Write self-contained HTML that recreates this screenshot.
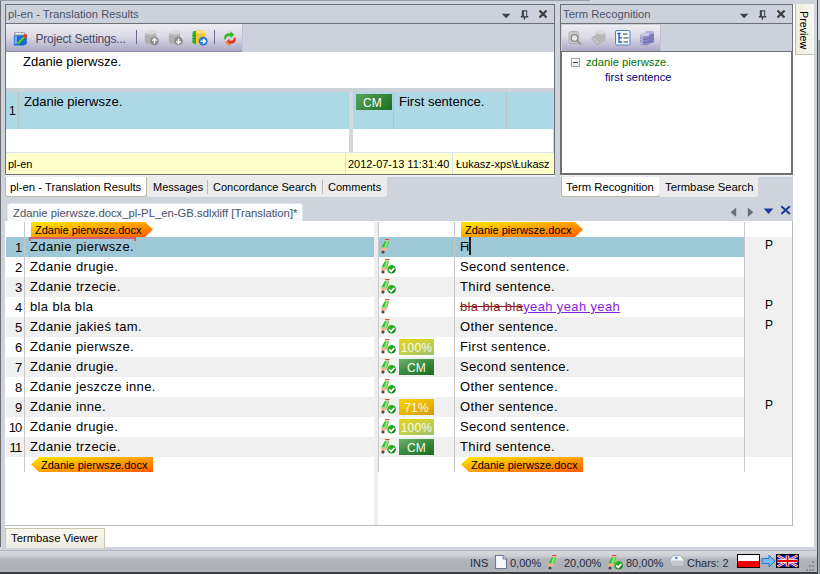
<!DOCTYPE html>
<html><head><meta charset="utf-8">
<style>
*{margin:0;padding:0;box-sizing:border-box}
html,body{width:820px;height:574px;overflow:hidden}
body{position:relative;background:#CFD3DC;font-family:"Liberation Sans",sans-serif;color:#000}
.a{position:absolute}
.t{position:absolute;white-space:nowrap;line-height:1}
svg.a{z-index:2}
.ui{font-size:11px}
.num{font-size:13px;letter-spacing:-0.8px}
.grid{font-size:13px;letter-spacing:0.36px}
.badge{width:35px;height:16px;color:#f4f8ee;font-size:12px;line-height:18px;text-align:center;letter-spacing:0.2px}
.b100{background:linear-gradient(160deg,#e8d21e,#c8d040 50%,#98c070)}
.bcm{background:linear-gradient(160deg,#6cb46c,#3a8a3e 50%,#1a6a20)}
.b71{background:linear-gradient(160deg,#fcd400,#eab800 50%,#d49a00)}
.tag{width:123px;height:15px}
.tag span{font-size:11px;color:#000;z-index:3}
</style></head><body>
<svg width="0" height="0" style="position:absolute">
<defs>
 <linearGradient id="tg" x1="0" y1="0" x2="1" y2="1">
  <stop offset="0" stop-color="#ffea00"/><stop offset="0.45" stop-color="#ffaa00"/><stop offset="1" stop-color="#ff5a00"/>
 </linearGradient>
 <linearGradient id="ckg" x1="0" y1="0" x2="1" y2="1"><stop offset="0" stop-color="#5ccc3c"/><stop offset="0.45" stop-color="#16a01a"/><stop offset="1" stop-color="#0a7010"/></linearGradient>
 <symbol id="penshape" viewBox="0 0 20 20">
  <polygon points="6.3,1.9 10.5,1.9 10.1,3.6 5.9,3.6" fill="#e4442a"/>
  <polygon points="5.9,3.6 10.1,3.6 10,4.2 5.7,4.2" fill="#f4f0ea"/>
  <polygon points="5.7,4.2 10,4.2 8.2,10.7 2.3,10.4" fill="#3cbc36"/>
  <polygon points="7.3,4.2 9.3,4.2 7.3,10.6 5.1,10.5" fill="#88ee70"/>
  <polygon points="2.2,10.4 8.2,10.7 7.5,12.6 5.1,14.6 2.5,14" fill="#f8b48a"/>
  <ellipse cx="4" cy="15" rx="1.6" ry="1.5" fill="#4a4a4e"/>
 </symbol>
 <symbol id="pen" viewBox="0 0 20 20"><use href="#penshape"/></symbol>
 <symbol id="pc" viewBox="0 0 20 20"><use href="#penshape"/>
  <circle cx="12.5" cy="12.3" r="4.3" fill="url(#ckg)"/>
  <path d="M10.2 12.5l2 1.9 3.1-3.5" stroke="#fff" stroke-width="1.8" fill="none"/>
 </symbol>
</defs></svg>

<!-- outer edges -->
<div class="a" style="left:0;top:0;width:1px;height:547px;background:#6b6d70"></div>
<div class="a" style="left:0;top:0;width:590px;height:1px;background:#9a9eaa"></div>
<div class="a" style="left:817px;top:0;width:1.2px;height:574px;background:#44484e"></div>
<div class="a" style="left:818.2px;top:40px;width:1.8px;height:534px;background:linear-gradient(90deg,#b4bcc0,#78868a)"></div>

<!-- ===== Top-left panel ===== -->
<div class="a" style="left:5px;top:4px;width:550px;height:171px;border:1px solid #6f7074;background:#CDD1DB"></div>
<div class="a" style="left:6px;top:23px;width:548px;height:1px;background:#6f7074"></div>
<div class="t ui" style="left:8px;top:8.5px;font-size:11.25px;color:#4a5468">pl-en - Translation Results</div>
<!-- title buttons -->
<svg class="a" style="left:500px;top:8px" width="50" height="14" viewBox="0 0 50 14">
 <path d="M1.8 5.8h8.6l-4.3 4.5z" fill="#3c3f48"/>
 <path d="M21.8 2.3h5.4v5.8h1v1.3h-3.1v2.4h-1.3v-2.4h-3v-1.3h1z" fill="#3c3f48"/>
 <rect x="23.9" y="3.4" width="2.3" height="4.7" fill="#CDD1DB"/>
 <path d="M39.5 2.5l7 7M46.5 2.5l-7 7" stroke="#3c3c3c" stroke-width="2.2"/>
</svg>
<!-- toolbar -->
<div class="a" style="left:6px;top:24px;width:237px;height:28px;background:linear-gradient(#ececf0,#dcdbe6 45%,#aba9c4);border-bottom:1px solid #8e8cac;border-right:1px solid #c4c2d4;border-radius:0 0 3px 0"></div>
<div class="t ui" style="left:35.5px;top:32.5px;font-size:12px;letter-spacing:-0.2px;color:#4a4a66">Project Settings...</div>
<div class="a" style="left:136px;top:30px;width:1px;height:14px;background:#6a6890"></div>
<div class="a" style="left:214px;top:30px;width:1px;height:14px;background:#6a6890"></div>

<!-- toolbar icons -->
<svg class="a" style="left:13px;top:31px" width="15" height="15" viewBox="0 0 15 15">
 <path d="M1.5 1.5h10l1.5 3h-11.5z" fill="#c4c4c4" stroke="#9a9a9a" stroke-width="0.8"/>
 <path d="M3 2.5h2M6 2.5h2M9 2.5h1.5" stroke="#fff" stroke-width="1"/>
 <path d="M0.8 4.5h13v8.5l-3 1.5h-10z" fill="#1c6ad6"/>
 <path d="M1.5 5v8h2.5v-8z" fill="#68b0f4"/>
 <path d="M4.5 13l7-7" stroke="#3aa02a" stroke-width="3"/>
 <path d="M4.8 12.4l6.4-6.4" stroke="#8ee878" stroke-width="1"/>
 <circle cx="12.3" cy="5" r="2" fill="#e0401e"/>
</svg>
<svg class="a" style="left:144px;top:30px" width="16" height="16" viewBox="0 0 16 16">
 <ellipse cx="6.5" cy="2.5" rx="5.5" ry="2" fill="#d8d8d8"/>
 <path d="M1 2.5v10c0 1.2 2.5 2 5.5 2s5.5-.8 5.5-2v-10c0 1.2-2.5 2-5.5 2s-5.5-.8-5.5-2z" fill="#b4b4b4"/>
 <path d="M1 6c0 1.2 2.5 2 5.5 2s5.5-.8 5.5-2M1 9.5c0 1.2 2.5 2 5.5 2s5.5-.8 5.5-2" stroke="#9a9a9a" fill="none" stroke-width="0.7"/>
 <circle cx="10.5" cy="11" r="4.3" fill="#8a8a8a"/>
 <path d="M10.5 13.5v-5M8.3 10.7l2.2-2.2 2.2 2.2" stroke="#fff" stroke-width="1.3" fill="none"/>
</svg>
<svg class="a" style="left:168px;top:30px" width="16" height="16" viewBox="0 0 16 16">
 <ellipse cx="6.5" cy="2.5" rx="5.5" ry="2" fill="#d8d8d8"/>
 <path d="M1 2.5v10c0 1.2 2.5 2 5.5 2s5.5-.8 5.5-2v-10c0 1.2-2.5 2-5.5 2s-5.5-.8-5.5-2z" fill="#b4b4b4"/>
 <path d="M1 6c0 1.2 2.5 2 5.5 2s5.5-.8 5.5-2M1 9.5c0 1.2 2.5 2 5.5 2s5.5-.8 5.5-2" stroke="#9a9a9a" fill="none" stroke-width="0.7"/>
 <circle cx="10.5" cy="11" r="4.3" fill="#8a8a8a"/>
 <path d="M10.5 8.5v5M8.3 11.3l2.2 2.2 2.2-2.2" stroke="#fff" stroke-width="1.3" fill="none"/>
</svg>
<svg class="a" style="left:192px;top:30px" width="16" height="16" viewBox="0 0 16 16">
 <path d="M0.5 2.5v10c0 1 1.5 1.8 3.5 1.8v-13.5c-2 0-3.5.7-3.5 1.7z" fill="#38b828"/>
 <path d="M0.5 5.5h3.5M0.5 8.5h3.5M0.5 11.5h3.5" stroke="#1e8a18" stroke-width="0.8"/>
 <path d="M4 1c1-0.6 2.5-1 4.5-1s4.5.7 4.5 2v10.5c0 1.2-2.3 2-4.5 2s-4.5-.8-4.5-2z" fill="#f2c43a"/>
 <ellipse cx="8.5" cy="2" rx="4.5" ry="1.6" fill="#fce27a"/>
 <circle cx="11.2" cy="11.2" r="4.4" fill="#1e6ad8"/>
 <circle cx="11.2" cy="11.2" r="3.4" fill="#2a86ec"/>
 <path d="M8.6 11.2h4.6M11.2 9l2.2 2.2-2.2 2.2" stroke="#fff" stroke-width="1.4" fill="none"/>
</svg>
<svg class="a" style="left:222px;top:31px" width="16" height="15" viewBox="0 0 16 15">
 <path d="M2.5 8.5c-1.2-3.5 1-6.2 4.5-6.2h1.5v-2l4 3.5-4 3.5v-2h-1.5c-2 0-3 1.2-3 3.2z" fill="#3cb82e"/>
 <path d="M13.5 6.5c1.2 3.5-1 6.2-4.5 6.2h-1.5v2l-4-3.5 4-3.5v2h1.5c2 0 3-1.2 3-3.2z" fill="#e8341e"/>
 <path d="M7.5 12.7v2l-4-3.5 1.5-1.3z" fill="#f88a2a"/>
</svg>
<!-- term recognition toolbar icons -->
<svg class="a" style="left:568px;top:31px" width="15" height="15" viewBox="0 0 15 15">
 <rect x="1" y="0.5" width="9.5" height="12" rx="2" fill="#c8c8c8" stroke="#a8a8a8" stroke-width="0.8"/>
 <circle cx="6.5" cy="7" r="3.3" fill="#e6e6e6" stroke="#8c8c8c" stroke-width="1.3"/>
 <path d="M9 9.5l4 4" stroke="#9a9a9a" stroke-width="1.8"/>
</svg>
<svg class="a" style="left:591px;top:30px" width="16" height="16" viewBox="0 0 16 16">
 <ellipse cx="9.5" cy="2.5" rx="5" ry="2" fill="#d6d6d6"/>
 <path d="M4.5 2.5v8c0 1.2 2.2 2 5 2s5-.8 5-2v-8c0 1.2-2.2 2-5 2s-5-.8-5-2z" fill="#b8b8b8"/>
 <path d="M0.5 8.5l3-2.5 6 6.5-3 2.5z" fill="#c2c2c2" stroke="#9a9a9a" stroke-width="0.7"/>
</svg>
<svg class="a" style="left:615px;top:30px" width="16" height="16" viewBox="0 0 16 16">
 <rect x="0.5" y="0.5" width="14.5" height="14.5" rx="1.5" fill="#f4f9ff" stroke="#4a82d4" stroke-width="1"/>
 <path d="M2.5 3.5h3M4 3.5v8.5h3M4 7.8h3" stroke="#1a5ac8" stroke-width="1.3" fill="none"/>
 <rect x="8" y="3.2" width="4.5" height="1.8" fill="#8a9098"/>
 <rect x="8.5" y="7" width="5" height="1.8" fill="#8a9098"/>
 <rect x="8.5" y="11" width="4.5" height="1.8" fill="#8a9098"/>
</svg>
<svg class="a" style="left:640px;top:30px" width="16" height="16" viewBox="0 0 16 16">
 <path d="M5 2.5v9c0 1 2 1.8 4.5 1.8s4.5-.8 4.5-1.8v-9z" fill="#7c7ab8"/>
 <ellipse cx="9.5" cy="2.5" rx="4.5" ry="1.7" fill="#b4b2e0"/>
 <path d="M0.5 4.5v9c0 1 2 1.8 4.5 1.8s4.5-.8 4.5-1.8v-9z" fill="#8e8cc8"/>
 <ellipse cx="5" cy="4.5" rx="4.5" ry="1.7" fill="#c8c6ee"/>
 <path d="M0.5 7.5c0 1 2 1.8 4.5 1.8s4.5-.8 4.5-1.8M0.5 10.5c0 1 2 1.8 4.5 1.8s4.5-.8 4.5-1.8" stroke="#5a58a0" fill="none" stroke-width="0.8"/>
 <path d="M2 6v8" stroke="#d8d6f8" stroke-width="1"/>
</svg>
<!-- content -->
<div class="a" style="left:6px;top:52px;width:548px;height:36px;background:#fff"></div>
<div class="t" style="left:23px;top:55px;font-size:13px">Zdanie pierwsze.</div>
<div class="a" style="left:6px;top:92px;width:547px;height:37px;background:#ADD8E6"></div>
<div class="a" style="left:18px;top:92px;width:1px;height:37px;background:#b9c4c0"></div>
<div class="t" style="left:9px;top:105px;font-size:12px">1</div>
<div class="t" style="left:24px;top:95px;font-size:13px">Zdanie pierwsze.</div>
<div class="a" style="left:349px;top:92px;width:4px;height:60px;background:#D3D7E0"></div>
<div class="a" style="left:6px;top:129px;width:343px;height:23px;background:#fff"></div>
<div class="a" style="left:353px;top:129px;width:200px;height:23px;background:#fff"></div>
<div class="a" style="left:356px;top:94px;width:36px;height:16px;background:linear-gradient(135deg,#5aa45a,#1a6e22)"></div>
<div class="t" style="left:363px;top:97px;font-size:12px;color:#fff">CM</div>
<div class="a" style="left:393px;top:92px;width:1px;height:37px;background:#b9c4c8"></div>
<div class="a" style="left:506px;top:92px;width:1px;height:37px;background:#b9c4c8"></div>
<div class="t" style="left:399px;top:95px;font-size:13px">First sentence.</div>
<div class="a" style="left:6px;top:152px;width:548px;height:1px;background:#d8e4ee"></div>
<div class="a" style="left:6px;top:153px;width:548px;height:21px;background:#FFFFCA"></div>
<div class="a" style="left:345px;top:153px;width:1px;height:21px;background:#d4e0ec"></div>
<div class="a" style="left:452px;top:153px;width:1px;height:21px;background:#d4e0ec"></div>
<div class="t ui" style="left:8px;top:158.5px">pl-en</div>
<div class="t ui" style="left:348px;top:158.5px">2012-07-13 11:31:40</div>
<div class="t ui" style="left:456px;top:158.5px">Łukasz-xps\Łukasz</div>

<!-- ===== Term Recognition panel ===== -->
<div class="a" style="left:560px;top:4px;width:233px;height:171px;border:1px solid #6f7074;background:#CDD1DB"></div>
<div class="a" style="left:561px;top:23px;width:231px;height:1px;background:#6f7074"></div>
<div class="t ui" style="left:563px;top:8.5px;font-size:11.25px;color:#4a5468">Term Recognition</div>
<svg class="a" style="left:738px;top:8px" width="50" height="14" viewBox="0 0 50 14">
 <path d="M1.8 5.8h8.6l-4.3 4.5z" fill="#3c3f48"/>
 <path d="M21.8 2.3h5.4v5.8h1v1.3h-3.1v2.4h-1.3v-2.4h-3v-1.3h1z" fill="#3c3f48"/>
 <rect x="23.9" y="3.4" width="2.3" height="4.7" fill="#CDD1DB"/>
 <path d="M39.5 2.5l7 7M46.5 2.5l-7 7" stroke="#3c3c3c" stroke-width="2.2"/>
</svg>
<div class="a" style="left:562px;top:25px;width:99px;height:27px;background:linear-gradient(#ececf0,#dcdbe6 45%,#aba9c4);border-bottom:1px solid #8e8cac;border-right:1px solid #c4c2d4;border-radius:0 0 3px 0"></div>
<div class="a" style="left:561px;top:51px;width:231px;height:123px;background:#fff;border:1px solid #6f7074"></div>
<div class="a" style="left:571px;top:58px;width:9px;height:9px;border:1px solid #a4a4a4;background:linear-gradient(#fff,#e4e4e4)"></div>
<div class="a" style="left:573px;top:62px;width:5px;height:1px;background:#3a3a3a"></div>
<div class="t ui" style="left:586px;top:57px;color:#007400;font-size:11.2px">zdanie pierwsze.</div>
<div class="t ui" style="left:605px;top:72px;color:#000080;font-size:11.2px">first sentence</div>

<!-- Preview side tab -->
<div class="a" style="left:793px;top:4px;width:20.8px;height:543px;background:#fff"></div>
<div class="a" style="left:795px;top:4px;width:18.8px;height:51px;background:linear-gradient(90deg,#efeddf,#f8f7f0);border-left:1px solid #bcbaa4;border-bottom:1px solid #c4c2ac"></div>
<div class="t ui" style="left:797px;top:11px;width:12px;writing-mode:vertical-rl;font-size:10.75px;color:#000">Preview</div>
<!-- ===== tabs row ===== -->
<div class="a" style="left:5px;top:175px;width:550px;height:2px;background:linear-gradient(#f6f7f9,#e4e6ea)"></div>
<div class="a" style="left:560px;top:175px;width:233px;height:2px;background:linear-gradient(#f6f7f9,#e4e6ea)"></div>
<div class="a" style="left:5px;top:177px;width:142px;height:20px;background:#fefefc;border:1px solid #bcb9a4;border-top:none;border-radius:0 0 3px 3px"></div>
<div class="t ui" style="left:10px;top:182px;font-size:11.3px">pl-en - Translation Results</div>
<div class="a" style="left:147px;top:177px;width:240px;height:20px;background:#ececec;border-radius:0 0 3px 3px"></div>
<div class="a" style="left:207px;top:180px;width:1px;height:14px;background:#b8b8b8"></div>
<div class="a" style="left:322px;top:180px;width:1px;height:14px;background:#b8b8b8"></div>
<div class="t ui" style="left:153px;top:182px">Messages</div>
<div class="t ui" style="left:213px;top:182px">Concordance Search</div>
<div class="t ui" style="left:328px;top:182px">Comments</div>

<div class="a" style="left:561px;top:177px;width:99px;height:20px;background:#fefefc;border:1px solid #bcb9a4;border-top:none;border-radius:0 0 3px 3px"></div>
<div class="t ui" style="left:566px;top:182px;font-size:11.3px">Term Recognition</div>
<div class="a" style="left:659px;top:177px;width:99px;height:20px;background:#ececec;border-radius:0 0 3px 3px"></div>
<div class="t ui" style="left:665px;top:182px;font-size:11.3px">Termbase Search</div>

<!-- ===== document tab ===== -->
<div class="a" style="left:7px;top:203px;width:296px;height:19px;background:linear-gradient(#fff,#f6f8fa);border:1px solid #dfe6ec;border-bottom:none;border-radius:3px 3px 0 0"></div>
<div class="t ui" style="left:13px;top:208px;font-size:11.3px;color:#4a5266">Zdanie pierwsze.docx_pl-PL_en-GB.sdlxliff [Translation]*</div>
<svg class="a" style="left:728px;top:204px" width="66" height="14" viewBox="0 0 66 14">
 <path d="M8.2 3.6v9.4l-5.5-4.7z" fill="#6a6e74"/>
 <path d="M19.8 3.6v9.4l5.5-4.7z" fill="#6a6e74"/>
 <path d="M35.8 4.6h9.5l-4.75 5.4z" fill="#1a3c98"/>
 <path d="M53.3 2.2l8.6 7.8M61.9 2.2l-8.6 7.8" stroke="#1a3c98" stroke-width="1.9"/>
</svg>
<div class="a" style="left:302px;top:221px;width:491px;height:1px;background:#b8bcc4"></div>

<!-- ===== editor ===== -->
<div class="a" style="left:5px;top:221px;width:788px;height:305px;background:#fff;border-right:1px solid #b8b8b8;border-bottom:1px solid #b8b8b8"></div>

<!-- grid -->
<div class="a" style="left:745px;top:237px;width:47px;height:220px;background:#F0F0F0"></div>
<div class="a" style="left:374px;top:222px;width:4px;height:303px;background:#EDEEF0"></div>
<div class="a" style="left:6px;top:237px;width:368px;height:20px;background:#9FC8D7"></div>
<div class="a" style="left:379px;top:237px;width:365px;height:20px;background:#9FC8D7"></div>
<div class="t num" style="left:0;width:21.5px;text-align:right;top:241px">1</div>
<div class="t grid" style="left:30px;top:240px">Zdanie pierwsze.</div>
<svg class="a" style="left:379px;top:237px" width="20" height="20"><use href="#pen"/></svg>
<div class="t grid" style="left:460px;top:240px">F</div>
<div class="t grid" style="left:466.3px;top:240px">i</div>
<div class="a" style="left:469px;top:237px;width:1.6px;height:18px;background:#2a1c10"></div>
<div class="t num" style="left:765px;top:239px;font-size:12px">P</div>
<div class="t num" style="left:0;width:21.5px;text-align:right;top:261px">2</div>
<div class="t grid" style="left:30px;top:260px">Zdanie drugie.</div>
<svg class="a" style="left:379px;top:257px" width="20" height="20"><use href="#pc"/></svg>
<div class="t grid" style="left:460px;top:260px">Second sentence.</div>
<div class="a" style="left:6px;top:277px;width:368px;height:20px;background:#F0F0F0"></div>
<div class="a" style="left:379px;top:277px;width:365px;height:20px;background:#F0F0F0"></div>
<div class="t num" style="left:0;width:21.5px;text-align:right;top:281px">3</div>
<div class="t grid" style="left:30px;top:280px">Zdanie trzecie.</div>
<svg class="a" style="left:379px;top:277px" width="20" height="20"><use href="#pc"/></svg>
<div class="t grid" style="left:460px;top:280px">Third sentence.</div>
<div class="t num" style="left:0;width:21.5px;text-align:right;top:301px">4</div>
<div class="t grid" style="left:30px;top:300px">bla bla bla</div>
<svg class="a" style="left:379px;top:297px" width="20" height="20"><use href="#pen"/></svg>
<div class="t grid" style="left:460px;top:300px"><span style="color:#8c1c1c;text-decoration:line-through">bla bla bla</span><span style="color:#8a1ee0;text-decoration:underline">yeah yeah yeah</span></div>
<div class="t num" style="left:765px;top:299px;font-size:12px">P</div>
<div class="a" style="left:6px;top:317px;width:368px;height:20px;background:#F0F0F0"></div>
<div class="a" style="left:379px;top:317px;width:365px;height:20px;background:#F0F0F0"></div>
<div class="t num" style="left:0;width:21.5px;text-align:right;top:321px">5</div>
<div class="t grid" style="left:30px;top:320px">Zdanie jakieś tam.</div>
<svg class="a" style="left:379px;top:317px" width="20" height="20"><use href="#pc"/></svg>
<div class="t grid" style="left:460px;top:320px">Other sentence.</div>
<div class="t num" style="left:765px;top:319px;font-size:12px">P</div>
<div class="t num" style="left:0;width:21.5px;text-align:right;top:341px">6</div>
<div class="t grid" style="left:30px;top:340px">Zdanie pierwsze.</div>
<svg class="a" style="left:379px;top:337px" width="20" height="20"><use href="#pc"/></svg>
<div class="a badge b100" style="left:399px;top:339px">100%</div>
<div class="t grid" style="left:460px;top:340px">First sentence.</div>
<div class="a" style="left:6px;top:357px;width:368px;height:20px;background:#F0F0F0"></div>
<div class="a" style="left:379px;top:357px;width:365px;height:20px;background:#F0F0F0"></div>
<div class="t num" style="left:0;width:21.5px;text-align:right;top:361px">7</div>
<div class="t grid" style="left:30px;top:360px">Zdanie drugie.</div>
<svg class="a" style="left:379px;top:357px" width="20" height="20"><use href="#pc"/></svg>
<div class="a badge bcm" style="left:399px;top:359px">CM</div>
<div class="t grid" style="left:460px;top:360px">Second sentence.</div>
<div class="t num" style="left:0;width:21.5px;text-align:right;top:381px">8</div>
<div class="t grid" style="left:30px;top:380px">Zdanie jeszcze inne.</div>
<svg class="a" style="left:379px;top:377px" width="20" height="20"><use href="#pc"/></svg>
<div class="t grid" style="left:460px;top:380px">Other sentence.</div>
<div class="a" style="left:6px;top:397px;width:368px;height:20px;background:#F0F0F0"></div>
<div class="a" style="left:379px;top:397px;width:365px;height:20px;background:#F0F0F0"></div>
<div class="t num" style="left:0;width:21.5px;text-align:right;top:401px">9</div>
<div class="t grid" style="left:30px;top:400px">Zdanie inne.</div>
<svg class="a" style="left:379px;top:397px" width="20" height="20"><use href="#pc"/></svg>
<div class="a badge b71" style="left:399px;top:399px">71%</div>
<div class="t grid" style="left:460px;top:400px">Other sentence.</div>
<div class="t num" style="left:765px;top:399px;font-size:12px">P</div>
<div class="t num" style="left:0;width:21.5px;text-align:right;top:421px">10</div>
<div class="t grid" style="left:30px;top:420px">Zdanie drugie.</div>
<svg class="a" style="left:379px;top:417px" width="20" height="20"><use href="#pc"/></svg>
<div class="a badge b100" style="left:399px;top:419px">100%</div>
<div class="t grid" style="left:460px;top:420px">Second sentence.</div>
<div class="a" style="left:6px;top:437px;width:368px;height:20px;background:#F0F0F0"></div>
<div class="a" style="left:379px;top:437px;width:365px;height:20px;background:#F0F0F0"></div>
<div class="t num" style="left:0;width:21.5px;text-align:right;top:441px">11</div>
<div class="t grid" style="left:30px;top:440px">Zdanie trzecie.</div>
<svg class="a" style="left:379px;top:437px" width="20" height="20"><use href="#pc"/></svg>
<div class="a badge bcm" style="left:399px;top:439px">CM</div>
<div class="t grid" style="left:460px;top:440px">Third sentence.</div>
<div class="a" style="left:24px;top:222px;width:1px;height:250px;background:#C8C8C8"></div>
<div class="a" style="left:378px;top:222px;width:1px;height:250px;background:#C8C8C8"></div>
<div class="a" style="left:454px;top:222px;width:1px;height:250px;background:#C8C8C8"></div>
<div class="a" style="left:744px;top:222px;width:1px;height:250px;background:#C8C8C8"></div>
<div class="a tag" style="left:31px;top:222px"><svg width="123" height="15" class="a" style="left:0;top:0"><polygon points="0,0 114,0 122,7.5 114,15 0,15" fill="url(#tg)"/></svg><span class="t" style="left:4px;top:3px">Zdanie pierwsze.docx</span></div>
<div class="a tag" style="left:461px;top:222px"><svg width="123" height="15" class="a" style="left:0;top:0"><polygon points="0,0 114,0 122,7.5 114,15 0,15" fill="url(#tg)"/></svg><span class="t" style="left:4px;top:3px">Zdanie pierwsze.docx</span></div>
<div class="a tag" style="left:31px;top:457px"><svg width="123" height="15" class="a" style="left:0;top:0"><polygon points="0,7.5 8,0 122,0 122,15 8,15" fill="url(#tg)"/></svg><span class="t" style="left:10px;top:3px">Zdanie pierwsze.docx</span></div>
<div class="a tag" style="left:461px;top:457px"><svg width="123" height="15" class="a" style="left:0;top:0"><polygon points="0,7.5 8,0 122,0 122,15 8,15" fill="url(#tg)"/></svg><span class="t" style="left:10px;top:3px">Zdanie pierwsze.docx</span></div>
<div class="a" style="left:29px;top:237px;width:107px;height:2px;background:#d0606e"></div>
<div class="a" style="left:29px;top:237px;width:2px;height:4px;background:#d0606e"></div>
<div class="a" style="left:134px;top:237px;width:2px;height:4px;background:#d0606e"></div>
<!-- ===== termbase viewer ===== -->
<div class="a" style="left:5px;top:526px;width:808.8px;height:21px;background:#fff"></div>
<div class="a" style="left:5px;top:528px;width:100px;height:20px;background:linear-gradient(#f8f7f0,#efede2);border:1px solid #c9c5a8;border-bottom:none"></div>
<div class="t ui" style="left:11px;top:533px;font-size:11.25px">Termbase Viewer</div>

<!-- ===== status bar ===== -->
<div class="a" style="left:0;top:550px;width:817px;height:24px;border-top:1px solid #b4b8be;background:linear-gradient(#d6d8dc,#cccfd4 5px,#b2b6bc 8px,#adb1b7 15px,#b3b7bd)"></div>
<div class="a" style="left:0;top:572px;width:817px;height:2px;background:#3c3e42"></div>
<div class="t ui" style="left:470px;top:558px;font-size:11px;color:#262c40">INS</div>
<svg class="a" style="left:494px;top:554px" width="14" height="16" viewBox="0 0 14 16">
 <path d="M1.5 1.5h7.5l3.5 3.5v9.5h-11z" fill="#f6f8fc" stroke="#6a7898" stroke-width="1.1"/>
 <path d="M9 1.5v3.5h3.5" fill="#dde4f0" stroke="#6a7898" stroke-width="1"/>
</svg>
<div class="t ui" style="left:510px;top:558px;font-size:11px;color:#262c40">0,00%</div>
<svg class="a" style="left:546px;top:553px" width="20" height="20" viewBox="0 0 20 20"><use href="#pen"/></svg>
<div class="t ui" style="left:564px;top:558px;font-size:11px;color:#262c40">20,00%</div>
<svg class="a" style="left:606px;top:553px" width="20" height="20" viewBox="0 0 20 20"><use href="#pc"/></svg>
<div class="t ui" style="left:626px;top:558px;font-size:11px;color:#262c40">80,00%</div>
<svg class="a" style="left:669px;top:555px" width="16" height="13" viewBox="0 0 16 13">
 <path d="M3.5 0.8h8l3.8 4.5-1.2 6.2h-10.5l-2.8-5.5z" fill="#d4d7dc" stroke="#9ea2a8" stroke-width="0.7"/>
 <path d="M3.8 1.2h7.6l3.2 4h-12.6z" fill="#fbfbfc"/>
 <path d="M1.3 6h13.4l-1 5h-9.8z" fill="#c4c8ce"/>
 <path d="M5.5 1.8l3.6 0.6-1.8 2.4z" fill="#2a76d8"/>
</svg>
<div class="t ui" style="left:687px;top:558px;font-size:11px;color:#262c40">Chars: 2</div>
<!-- flags -->
<div class="a" style="left:737px;top:554px;width:23px;height:14px;background:#000"></div>
<div class="a" style="left:738px;top:555px;width:21px;height:6px;background:#fff"></div>
<div class="a" style="left:738px;top:561px;width:21px;height:6px;background:#ee0000"></div>
<svg class="a" style="left:761px;top:554px" width="15" height="14" viewBox="0 0 15 14">
 <path d="M1 4.5h7v-3.5l6 6-6 6v-3.5h-7z" fill="#7ab8f0" stroke="#2a7ad8" stroke-width="1"/>
</svg>
<svg class="a" style="left:776px;top:554px" width="23" height="14" viewBox="0 0 23 14">
 <rect x="0" y="0" width="23" height="14" fill="#000"/>
 <rect x="1.5" y="1.5" width="20" height="11" fill="#0a20c8"/>
 <path d="M1.5 1.5l20 11M21.5 1.5l-20 11" stroke="#fff" stroke-width="2.4"/>
 <path d="M1.5 1.5l20 11M21.5 1.5l-20 11" stroke="#e80000" stroke-width="0.9"/>
 <path d="M11.5 1.5v11M1.5 7h20" stroke="#fff" stroke-width="3.6"/>
 <path d="M11.5 1.5v11M1.5 7h20" stroke="#e80000" stroke-width="1.8"/>
</svg>
<!-- grip -->
<svg class="a" style="left:803px;top:560px" width="14" height="13" viewBox="0 0 14 13">
 <g fill="#8a8e94"><rect x="9" y="1" width="2" height="2"/><rect x="6" y="5" width="2" height="2"/><rect x="9" y="5" width="2" height="2"/><rect x="3" y="9" width="2" height="2"/><rect x="6" y="9" width="2" height="2"/><rect x="9" y="9" width="2" height="2"/></g>
</svg>
</body></html>
